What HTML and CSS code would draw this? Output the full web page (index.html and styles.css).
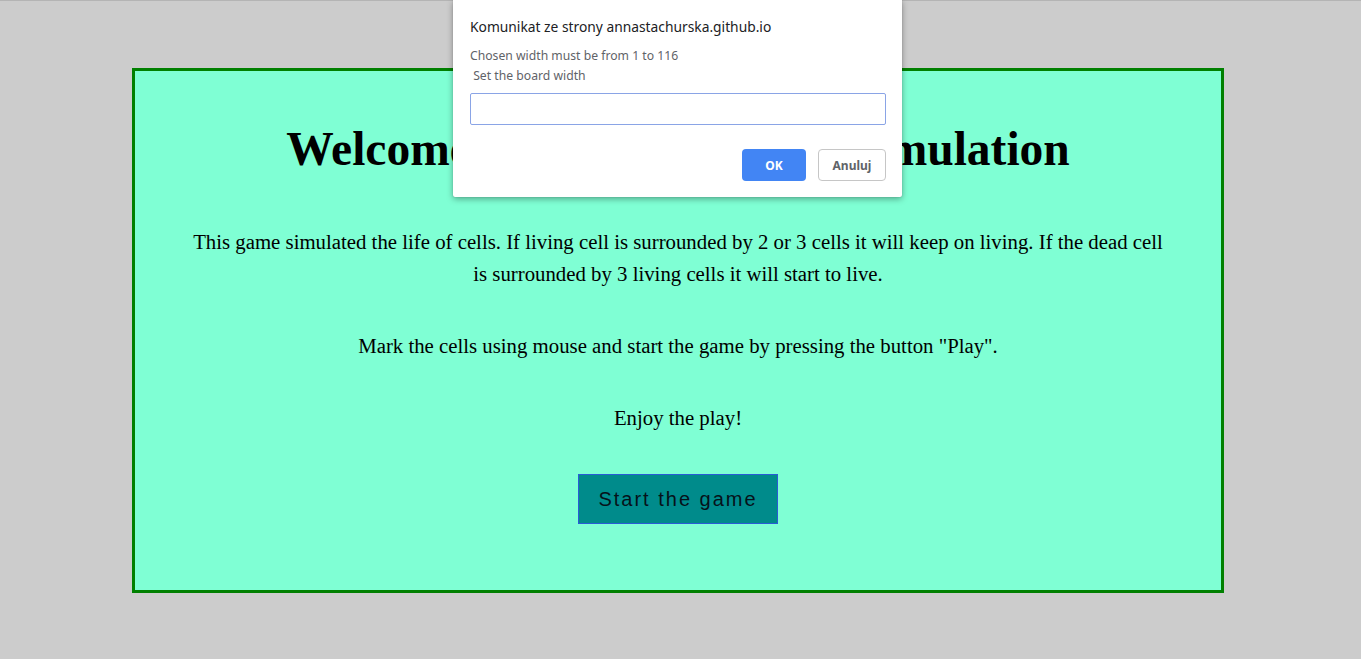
FILE: index.html
```html
<!DOCTYPE html>
<html>
<head>
<meta charset="utf-8">
<link rel="stylesheet" href="styles.css">
</head>
<body>
<div class="topline"></div>
<main class="board">
  <h1 class="title">Welcome to the game of life simulation</h1>
  <p class="text">This game simulated the life of cells. If living cell is surrounded by 2 or 3 cells it will keep on living. If the dead cell is surrounded by 3 living cells it will start to live.</p>
  <p class="text">Mark the cells using mouse and start the game by pressing the button "Play".</p>
  <p class="text">Enjoy the play!</p>
  <button class="start">Start the game</button>
</main>
<div class="dialog">
  <div class="dialog-title">Komunikat ze strony annastachurska.github.io</div>
  <div class="dialog-msg">Chosen width must be from 1 to 116</div>
  <div class="dialog-msg dialog-msg2">&nbsp;Set the board width</div>
  <div class="dialog-input"></div>
  <div class="dialog-buttons">
    <div class="btn btn-ok">OK</div>
    <div class="btn btn-cancel">Anuluj</div>
  </div>
</div>
</body>
</html>
```
FILE: styles.css
```css
html, body {
  margin: 0;
  padding: 0;
}
body {
  background: #cccccc;
  font-family: "Liberation Serif", "Times New Roman", serif;
  min-height: 659px;
  position: relative;
}
.topline {
  height: 1px;
  background: #b4b4b4;
}
.board {
  margin: 67px 0 0 132px;
  border: 3px solid #008000;
  background: #7fffd4;
  padding: 20px 55px 66px;
  box-sizing: content-box;
  width: 976px;
  text-align: center;
}
.title {
  font-size: 47.5px;
  font-weight: bold;
  margin: 31px 0 50px;
  line-height: 54px;
}
.text {
  font-size: 20.8px;
  line-height: 32px;
  margin: 0 0 40px;
}
.start {
  width: 200px;
  height: 50px;
  background: #008b8b;
  border: 1px solid #2a5bd7;
  font-family: "Liberation Sans", Arial, sans-serif;
  font-size: 20px;
  letter-spacing: 2px;
  color: #06121a;
  padding: 0;
  margin: 0;
}
.dialog {
  position: absolute;
  left: 453px;
  top: 0;
  width: 449px;
  height: 197px;
  background: #ffffff;
  border-radius: 0 0 2px 2px;
  box-shadow: 0 2px 6px rgba(0,0,0,0.35), 0 0 1px rgba(0,0,0,0.3);
  box-sizing: border-box;
  padding: 17px 16px 0 17px;
  font-family: "Noto Sans", "Open Sans", sans-serif;
}
.dialog-title {
  font-size: 13.8px;
  color: #202124;
  line-height: 20px;
}
.dialog-msg {
  font-size: 12.2px;
  color: #5f6368;
  line-height: 20px;
  margin-top: 9px;
}
.dialog-msg2 {
  margin-top: 0;
}
.dialog-input {
  margin-top: 7px;
  height: 32px;
  box-sizing: border-box;
  border: 1px solid #8aa4e6;
  border-radius: 2px;
}
.dialog-buttons {
  display: flex;
  justify-content: flex-end;
  gap: 12px;
  margin-top: 24px;
}
.btn {
  height: 32px;
  box-sizing: border-box;
  border-radius: 4px;
  font-size: 12px;
  font-weight: bold;
  display: flex;
  align-items: center;
  justify-content: center;
}
.btn-ok {
  width: 64px;
  background: #4285f4;
  color: #ffffff;
}
.btn-cancel {
  width: 68px;
  border: 1px solid #c6c6c6;
  color: #5f6368;
}
```
